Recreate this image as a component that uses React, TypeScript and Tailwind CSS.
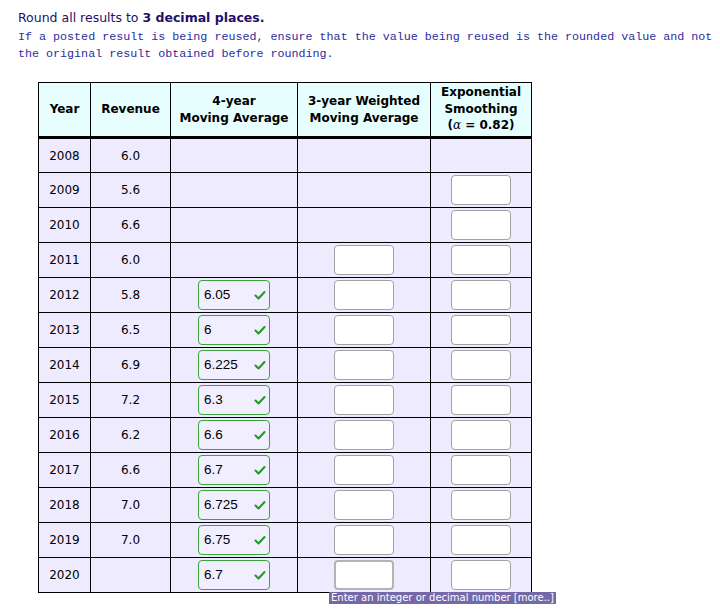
import React from "react";

const years = [2008, 2009, 2010, 2011, 2012, 2013, 2014, 2015, 2016, 2017, 2018, 2019, 2020];
const revenue: (string | null)[] = ["6.0", "5.6", "6.6", "6.0", "5.8", "6.5", "6.9", "7.2", "6.2", "6.6", "7.0", "7.0", null];
const ma4: (string | null)[] = [null, null, null, null, "6.05", "6", "6.225", "6.3", "6.6", "6.7", "6.725", "6.75", "6.7"];

function Check() {
  return (
    <svg width="14" height="12" viewBox="0 0 14 12" className="shrink-0">
      <polyline points="2.5,6.5 5.5,9.5 11.5,3" fill="none" stroke="#1f9a1f" strokeWidth="2" strokeLinecap="round" strokeLinejoin="round" />
    </svg>
  );
}

function GreenBox({ v }: { v: string }) {
  return (
    <div className="mx-auto flex h-[30px] w-[72px] items-center justify-between rounded-[4px] border border-[#3aa63a] bg-[#f1eeff] pl-[5px] pr-[2px] text-[13.5px] text-black" style={{ fontFamily: '"Liberation Sans", Arial, sans-serif' }}>
      <span>{v}</span>
      <Check />
    </div>
  );
}

function EmptyBox({ focused }: { focused?: boolean }) {
  return (
    <div className={`mx-auto h-[30px] w-[60px] rounded-[4px] bg-white ${focused ? "border-2 border-[#b4b4b4]" : "border border-[#a2a2a2]"}`} />
  );
}

export default function App() {
  return (
    <div className="min-h-[616px] w-[720px] bg-white pl-[18px] pt-[9px]" style={{ fontFamily: '"DejaVu Sans", Verdana, sans-serif' }}>
      <div className="text-[12.5px] leading-[18px] text-[#1e106a]">
        Round all results to <b>3 decimal places.</b>
      </div>
      <div className="mt-[2px] text-[11.7px] leading-[17px] text-[#2d2da0]" style={{ fontFamily: '"Liberation Mono", "Courier New", monospace' }}>
        If a posted result is being reused, ensure that the value being reused is the rounded value and not
        <br />
        the original result obtained before rounding.
      </div>
      <table className="ml-[20px] mt-[19px] table-fixed border-collapse text-[12px] text-black">
        <colgroup>
          <col className="w-[52px]" />
          <col className="w-[80px]" />
          <col className="w-[127px]" />
          <col className="w-[133px]" />
          <col className="w-[101px]" />
        </colgroup>
        <thead>
          <tr className="h-[55px] bg-[#e6fefe] font-bold leading-[16.5px]">
            <th className="border border-b-[3px] border-black p-0 text-center font-bold">Year</th>
            <th className="border border-b-[3px] border-black p-0 text-center font-bold">Revenue</th>
            <th className="border border-b-[3px] border-black p-0 text-center font-bold">
              4-year
              <br />
              Moving Average
            </th>
            <th className="border border-b-[3px] border-black p-0 text-center font-bold">
              3-year Weighted
              <br />
              Moving Average
            </th>
            <th className="border border-b-[3px] border-black p-0 pb-[1px] text-center font-bold">
              Exponential
              <br />
              Smoothing
              <br />
              (<i className="font-normal" style={{ fontFamily: '"DejaVu Serif", serif' }}>α</i> = 0.82)
            </th>
          </tr>
        </thead>
        <tbody>
          {years.map((y, i) => (
            <tr key={y} className="h-[35px] bg-[#efebff]">
              <td className="border border-black p-0 text-center">{y}</td>
              <td className="border border-black p-0 text-center">{revenue[i] ?? ""}</td>
              <td className="border border-black p-0">{ma4[i] ? <GreenBox v={ma4[i] as string} /> : null}</td>
              <td className="relative border border-black p-0">
                {i >= 3 ? <EmptyBox focused={i === 12} /> : null}
                {i === 12 ? (
                  <div className="absolute left-[31px] top-[34px] z-10 whitespace-nowrap bg-[#7468a8] px-[2px] text-[10px] leading-[12px] text-white">
                    Enter an integer or decimal number [more..]
                  </div>
                ) : null}
              </td>
              <td className="border border-black p-0">{i >= 1 ? <EmptyBox /> : null}</td>
            </tr>
          ))}
        </tbody>
      </table>
    </div>
  );
}
